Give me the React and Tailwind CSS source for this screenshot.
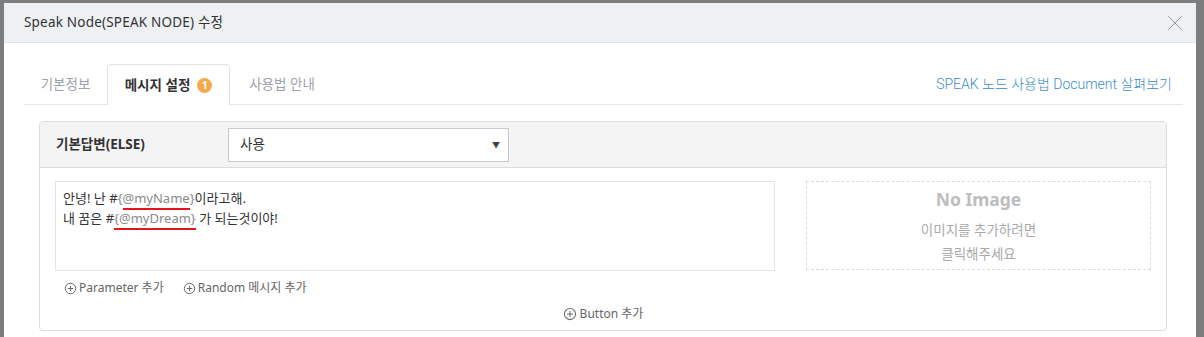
import { X } from 'lucide-react';

const font = { fontFamily: '"Noto Sans", "Noto Sans CJK KR", sans-serif' };

function PlusCircle({ className = '' }) {
    return (
        <svg viewBox="0 0 16 16" className={className} fill="none" stroke="currentColor" strokeWidth="1.2">
            <circle cx="8" cy="8" r="6.4" />
            <path d="M8 4.6v6.8M4.6 8h6.8" />
        </svg>
    );
}

export default function App() {
    return (
        <div className="w-[1204px] h-[337px] bg-[#7d7d7d] overflow-hidden pt-[3px] pl-[4px]" style={font}>
            <div className="w-[1192px] h-[340px] bg-white rounded-tl-[2px] flex flex-col">
                {/* header */}
                <div className="h-[40px] shrink-0 bg-[#eef1f4] border-b border-[#dfe3e7] flex items-center justify-between pl-[20px] pr-[8px]">
                    <h2 className="text-[13.5px] text-[#333] tracking-[0.2px]">Speak Node(SPEAK NODE) 수정</h2>
                    <X className="w-[26px] h-[26px] text-[#8a8a8a]" strokeWidth={0.8} />
                </div>

                <div className="pl-[20px] pr-[13px]">
                    {/* tabs */}
                    <div className="mt-[21px] h-[41px] border-b border-[#e6e6e6] flex items-end justify-between">
                        <div className="flex h-full">
                            <div className="w-[83px] flex items-center justify-center text-[13.5px] text-[#9aa3ad]">기본정보</div>
                            <div className="w-[123px] flex items-center justify-center gap-[7px] border border-b-0 border-[#e3e3e3] rounded-t-[4px] bg-white -mb-px text-[13.5px] font-bold text-[#333]">
                                메시지 설정
                                <span className="w-[15px] h-[15px] rounded-full bg-[#f5a94b] text-white text-[10px] font-bold flex items-center justify-center leading-none">1</span>
                            </div>
                            <div className="w-[104px] flex items-center justify-center text-[13.5px] text-[#9aa3ad]">사용법 안내</div>
                        </div>
                        <a className="self-center text-[14px] font-light text-[#3d8ccf] pr-[11px]" style={{ fontFamily: 'Roboto, "Noto Sans CJK KR", sans-serif' }}>
                            SPEAK 노드 사용법 Document 살펴보기
                        </a>
                    </div>

                    {/* card */}
                    <div className="mt-[16px] ml-[15px] mr-[16px] border border-[#dcdcdc] rounded-[4px] h-[210px]">
                        <div className="h-[46px] bg-[#f4f4f4] border-b border-[#dcdcdc] rounded-t-[4px] flex items-center px-[16px]">
                            <span className="w-[172px] text-[13.5px] font-bold text-[#333]">기본답변(ELSE)</span>
                            <div className="w-[281px] h-[34px] bg-white border border-[#c9c9c9] flex items-center justify-between pl-[11px] pr-[8px]">
                                <span className="text-[13.5px] text-[#333]">사용</span>
                                <span className="text-[8px] text-[#444]">▼</span>
                            </div>
                        </div>

                        <div className="px-[15px] pt-[13px] flex gap-[31px]">
                            <div className="flex-1 h-[90px] border border-[#e4e4e4] px-[7px] py-[6px] text-[13px] leading-[20px] text-[#333]">
                                <p>
                                    안녕! 난 #<span className="text-[#8a8a8a]">{'{'}<span className="border-b-[2px] border-[#e3141c] pb-[1px]">@myName</span>{'}'}</span>이라고해.
                                </p>
                                <p>
                                    내 꿈은 #<span className="text-[#8a8a8a] border-b-[2px] border-[#e3141c] pb-[1px]">{'{'}@myDream{'}'}</span> 가 되는것이야!
                                </p>
                            </div>
                            <div className="w-[345px] h-[89px] border border-dashed border-[#dcdcdc] flex flex-col items-center pt-[4px]">
                                <span className="text-[17.5px] font-bold text-[#bdbdbd] leading-[26px]">No Image</span>
                                <span className="mt-[6px] text-[13.5px] text-[#aaa] leading-[24px]">이미지를 추가하려면</span>
                                <span className="text-[13.5px] text-[#aaa] leading-[24px]">클릭해주세요</span>
                            </div>
                        </div>

                        <div className="flex gap-[19px] pl-[24px] mt-[8px] text-[12px] text-[#666]">
                            <span className="flex items-center gap-[2px]"><PlusCircle className="w-[13px] h-[13px]" />Parameter 추가</span>
                            <span className="flex items-center gap-[2px]"><PlusCircle className="w-[13px] h-[13px]" />Random 메시지 추가</span>
                        </div>

                        <div className="flex justify-center mt-[8px] text-[12px] text-[#666]">
                            <span className="flex items-center gap-[3px]"><PlusCircle className="w-[14px] h-[14px]" />Button 추가</span>
                        </div>
                    </div>
                </div>
            </div>
        </div>
    );
}
